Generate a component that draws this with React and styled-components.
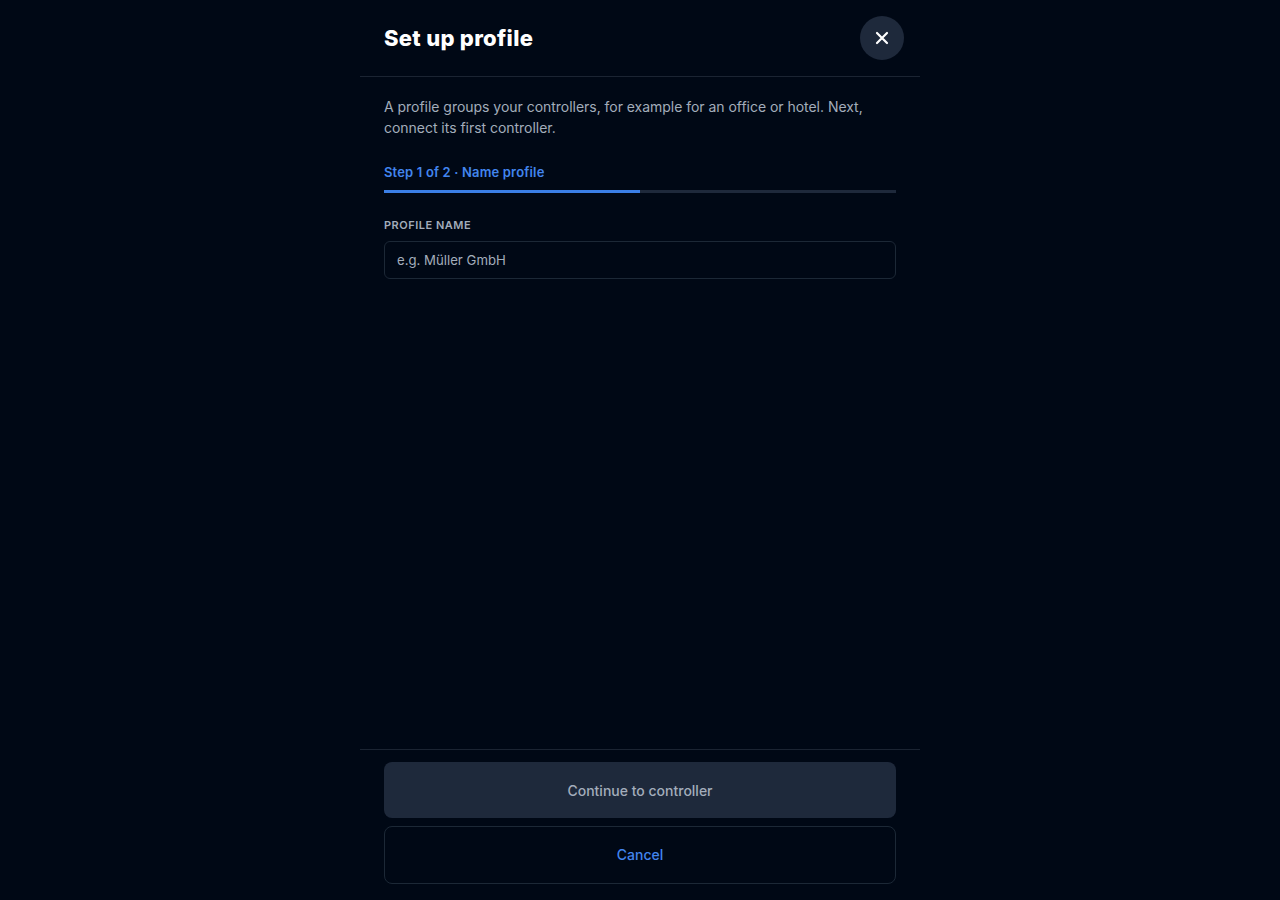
import React from 'react';
import styled, { createGlobalStyle } from 'styled-components';

const Global = createGlobalStyle`
    html, body {
        margin: 0;
        height: 100%;
        background: #000815;
        font-family: Inter, "Liberation Sans", sans-serif;
    }
    * { box-sizing: border-box; }
`

export default function App() {
    return (
        <Page>
            <Global />
            <Sheet>
                <Header>
                    <Title>Set up profile</Title>
                    <CloseButton aria-label="Close">
                        <svg width="14" height="14" viewBox="0 0 14 14" fill="none" stroke="#fff" strokeWidth="2.2" strokeLinecap="round">
                            <path d="M2 2l10 10M12 2L2 12" />
                        </svg>
                    </CloseButton>
                </Header>
                <Body>
                    <Intro>A profile groups your controllers, for example for an office or hotel. Next, connect its first controller.</Intro>
                    <Step>Step 1 of 2 · Name profile</Step>
                    <Track><Fill $percent={50} /></Track>
                    <Label htmlFor="profile-name">PROFILE NAME</Label>
                    <Input id="profile-name" placeholder="e.g. Müller GmbH" />
                </Body>
                <Footer>
                    <PrimaryButton disabled>Continue to controller</PrimaryButton>
                    <SecondaryButton>Cancel</SecondaryButton>
                </Footer>
            </Sheet>
        </Page>
    );
}

const Page = styled.div`
    height: 900px;
    display: flex;
    justify-content: center;
    background: #000815;
`
const Sheet = styled.div`
    width: 560px;
    height: 100%;
    display: flex;
    flex-direction: column;
`
const Header = styled.div`
    height: 77px;
    padding: 0 16px 1px 24px;
    display: flex;
    align-items: center;
    justify-content: space-between;
    border-bottom: 1px solid #1b2432;
`
const Title = styled.h1`
    margin: 0;
    font-size: 22px;
    font-weight: 800;
    letter-spacing: 0.3px;
    line-height: 28px;
    color: #fff;
`
const CloseButton = styled.button`
    width: 44px;
    height: 44px;
    padding: 0;
    border: none;
    border-radius: 50%;
    background: #1e293b;
    display: flex;
    align-items: center;
    justify-content: center;
`
const Body = styled.div`
    flex: 1;
    padding: 19px 24px 0;
    display: flex;
    flex-direction: column;
`
const Intro = styled.p`
    margin: 0;
    font-size: 14px;
    letter-spacing: -0.03px;
    line-height: 21px;
    color: #a3adbb;
`
const Step = styled.div`
    margin-top: 24px;
    font-size: 13px;
    font-weight: 600;
    letter-spacing: 0.16px;
    line-height: 20px;
    color: #4285ee;
`
const Track = styled.div`
    margin-top: 8px;
    height: 3px;
    background: #1e293b;
`
const Fill = styled.div`
    width: ${p => p.$percent}%;
    height: 100%;
    background: #3b7fe6;
`
const Label = styled.label`
    margin-top: 25px;
    font-size: 11px;
    font-weight: 600;
    letter-spacing: 0.5px;
    line-height: 14px;
    color: #a3adbb;
`
const Input = styled.input`
    margin-top: 9px;
    height: 38px;
    padding: 0 12px 1px;
    border: 1px solid #1c2836;
    border-radius: 6px;
    background: #000815;
    font-family: inherit;
    font-size: 13.2px;
    color: #fff;
    &::placeholder {
        color: #a3adbb;
        opacity: 1;
    }
`
const Footer = styled.div`
    padding: 12px 24px 16px;
    display: flex;
    flex-direction: column;
    gap: 8px;
    border-top: 1px solid #1b2432;
`
const PrimaryButton = styled.button`
    height: 56px;
    padding: 0;
    border: none;
    border-radius: 8px;
    background: #1e293b;
    font-family: inherit;
    font-size: 14px;
    font-weight: 500;
    color: #a3adbb;
`
const SecondaryButton = styled.button`
    height: 58px;
    padding: 0 0 2px;
    border: 1px solid #1c2836;
    border-radius: 8px;
    background: transparent;
    font-family: inherit;
    font-size: 14px;
    font-weight: 500;
    color: #4285ee;
`
